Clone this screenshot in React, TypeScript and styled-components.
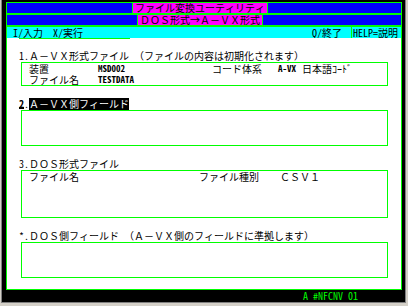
import React from "react";
import styled, { createGlobalStyle } from "styled-components";

const GREEN = "#00ff00";
const FONT = `"Noto Sans Mono CJK JP", "Noto Sans CJK JP", "Liberation Mono", monospace`;

const Global = createGlobalStyle`
  html, body { margin: 0; padding: 0; background: #d4d0c8; }
  body { font-family: ${FONT}; font-size: 10px; color: #000; }
  * { box-sizing: border-box; }
`;

const Window = styled.div`
  width: 408px;
  height: 306px;
  background: #d4d0c8;
  padding: 0 2px 3px 1px;
  display: flex;
  flex-direction: column;
`;

const Sunken = styled.div`
  flex: 1;
  display: flex;
  flex-direction: column;
  border-left: 1px solid #808080;
  border-right: 1px solid #808080;
  border-bottom: 1px solid #808080;
`;

const Terminal = styled.div`
  height: 302px;
  background: #000;
  padding: 2px 3px 0 4px;
  display: flex;
  flex-direction: column;
`;

const TitleBar = styled.div`
  height: 12px;
  border: 1px solid ${GREEN};
  background: #0000ff;
  display: flex;
  justify-content: center;
  padding-right: 8px;
`;

const Title = styled.div`
  background: #ff00ff;
  border-left: 1px solid ${GREEN};
  border-right: 1px solid ${GREEN};
  padding: 0 2px;
  line-height: 10px;
  white-space: pre;
`;

const KeyBar = styled.div`
  height: 12px;
  background: #00ffff;
  border: 1px solid ${GREEN};
  border-bottom: none;
  display: flex;
  line-height: 11px;
  white-space: pre;
`;

const KeyLeft = styled.span`
  flex: 1;
  padding-left: 6px;
`;

const KeyQuit = styled.span`
  padding-right: 9px;
`;

const KeyHelp = styled.span`
  border-left: 1px solid ${GREEN};
  padding: 0 3px 0 1px;
`;

const Screen = styled.div`
  height: 252px;
  background: #fff;
  border: 1px solid ${GREEN};
  border-top: none;
  display: flex;
  flex-direction: column;
`;

const InputLine = styled.div`
  margin: 0 0 11px 12px;
  width: 111px;
  height: 1px;
  background: ${GREEN};
`;

const Heading = styled.div<{ $gap?: boolean }>`
  height: 12px;
  line-height: 12px;
  padding-left: 12px;
  margin-top: ${(p) => (p.$gap ? "12px" : "0")};
  white-space: pre;
`;

const Cursor = styled.span`
  display: inline-block;
  height: 11px;
  line-height: 11px;
  border-bottom: 2px solid #000;
  font-weight: 700;
`;

const Reverse = styled.span`
  display: inline-block;
  background: #000;
  color: #fff;
  height: 12px;
  line-height: 12px;
`;

const Box = styled.div<{ $rows: number }>`
  height: ${(p) => p.$rows * 12}px;
  margin: 0 13px 0 14px;
  border: 1px solid ${GREEN};
  padding-left: 7px;
  display: flex;
  flex-direction: column;
`;

const BoxRow = styled.div`
  height: 11px;
  line-height: 11px;
  display: flex;
  white-space: pre;
`;

const Cell = styled.span<{ $w?: number }>`
  width: ${(p) => (p.$w ? `${p.$w}px` : "auto")};
  flex: none;
`;

const Code = styled.span<{ $w?: number }>`
  width: ${(p) => (p.$w ? `${p.$w}px` : "auto")};
  flex: none;
  font-weight: 700;
  font-size: 9px;
`;

const StatusBar = styled.div`
  height: 12px;
  line-height: 12px;
  color: ${GREEN};
  padding-left: 297px;
  white-space: pre;
`;

export default function App() {
  return (
    <>
      <Global />
      <Window>
        <Sunken>
          <Terminal>
            <TitleBar>
              <Title>ファイル変換ユーティリティ</Title>
            </TitleBar>
            <TitleBar>
              <Title>ＤＯＳ形式→Ａ－ＶＸ形式</Title>
            </TitleBar>
            <KeyBar>
              <KeyLeft>I/入力  X/実行</KeyLeft>
              <KeyQuit>Q/終了</KeyQuit>
              <KeyHelp>HELP=説明</KeyHelp>
            </KeyBar>
            <Screen>
              <InputLine />
              <Heading>1.Ａ－ＶＸ形式ファイル　（ファイルの内容は初期化されます）</Heading>
              <Box $rows={2}>
                <BoxRow>
                  <Cell $w={69}>装置</Cell>
                  <Code $w={114}>MSD002</Code>
                  <Cell $w={66}>コード体系</Cell>
                  <Code $w={24}>A-VX</Code>
                  <Cell>日本語ｺｰﾄﾞ</Cell>
                </BoxRow>
                <BoxRow>
                  <Cell $w={69}>ファイル名</Cell>
                  <Code>TESTDATA</Code>
                </BoxRow>
              </Box>
              <Heading $gap>
                <Cursor>2</Cursor>.<Reverse>Ａ－ＶＸ側フィールド</Reverse>
              </Heading>
              <Box $rows={3} />
              <Heading $gap>3.ＤＯＳ形式ファイル</Heading>
              <Box $rows={4}>
                <BoxRow>
                  <Cell $w={170}>ファイル名</Cell>
                  <Cell $w={81}>ファイル種別</Cell>
                  <Cell>ＣＳＶ１</Cell>
                </BoxRow>
              </Box>
              <Heading $gap>*.ＤＯＳ側フィールド　（Ａ－ＶＸ側のフィールドに準拠します）</Heading>
              <Box $rows={3} />
            </Screen>
            <StatusBar>A #NFCNV 01</StatusBar>
          </Terminal>
        </Sunken>
      </Window>
    </>
  );
}
